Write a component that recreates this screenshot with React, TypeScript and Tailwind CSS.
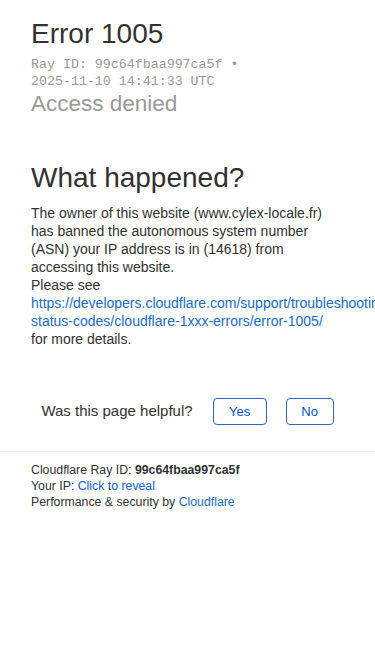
export default function App() {
  const sans = { fontFamily: '"Liberation Sans", Arial, sans-serif' };
  return (
    <div className="w-[375px] min-h-[667px] overflow-hidden bg-white text-[#313131]" style={sans}>
      <div className="px-[31px] pt-[20px]">
        <h1 className="text-[28px] leading-[28px] font-normal text-[#313131]">Error 1005</h1>
        <div className="mt-[8px] text-[13.3px] leading-[17px] text-[#999]" style={{ fontFamily: '"Liberation Mono", "Courier New", monospace' }}>
          <div>Ray ID: 99c64fbaa997ca5f •</div>
          <div>2025-11-10 14:41:33 UTC</div>
        </div>
        <h2 className="mt-[2px] text-[22.5px] leading-[24px] text-[#999]">Access denied</h2>
        <h2 className="mt-[46px] text-[28px] leading-[32px] text-[#313131]">What happened?</h2>
        <p className="mt-[10px] text-[14px] leading-[18px] text-[#313131]">
          The owner of this website (www.cylex-locale.fr) has banned the autonomous system number (ASN) your IP address is in (14618) from accessing this website.
          <br />
          Please see{" "}
          <a className="text-[#1a6cc4]" href="#">https://developers.cloudflare.com/support/troubleshooting/http-status-codes/cloudflare-1xxx-errors/error-1005/</a>
          <br />
          for more details.
        </p>
      </div>
      <div className="mt-[50px] flex items-center justify-center gap-[20px]">
        <span className="text-[15px] text-[#313131]">Was this page helpful?</span>
        <button className="w-[54px] h-[27px] rounded-[4px] border border-[#2b67c0] text-[13px] text-[#0051c3]">Yes</button>
        <button className="-ml-[1px] w-[48px] h-[27px] rounded-[4px] border border-[#2b67c0] text-[13px] text-[#0051c3]">No</button>
      </div>
      <div className="mt-[26px] border-t border-[#ededed] px-[31px] pt-[10px] text-[12.3px] leading-[16px] text-[#313131]">
        <div>Cloudflare Ray ID: <span className="font-bold">99c64fbaa997ca5f</span></div>
        <div>Your IP: <span className="text-[#0b5fcf]">Click to reveal</span></div>
        <div>Performance &amp; security by <span className="text-[#1a6cc4]">Cloudflare</span></div>
      </div>
    </div>
  );
}
